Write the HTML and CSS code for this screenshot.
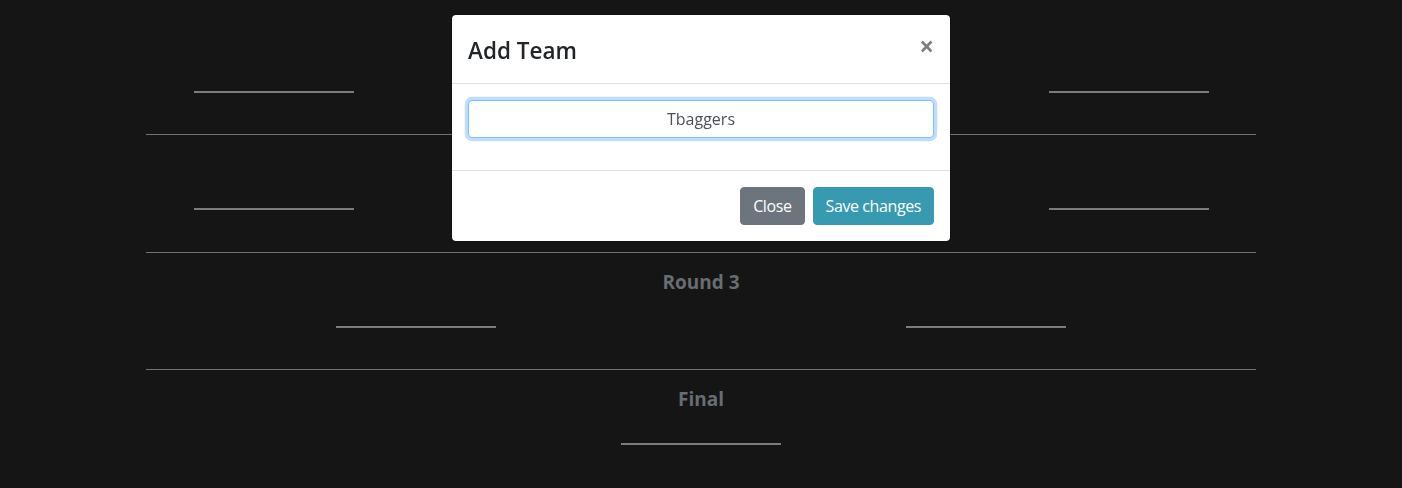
FILE: index.html
```html
<!DOCTYPE html>
<html lang="en">
<head>
<meta charset="utf-8">
<title>Bracket</title>
<link rel="stylesheet" href="styles.css">
</head>
<body>
<div class="page">
  <div class="container">
    <section class="round first">
      <h5 class="round-title">Round 1</h5>
      <div class="slots cols-4">
        <div class="slot"><span class="slot-line"></span></div>
        <div class="slot"><span class="slot-line"></span></div>
        <div class="slot"><span class="slot-line"></span></div>
        <div class="slot"><span class="slot-line"></span></div>
      </div>
    </section>
    <section class="round">
      <h5 class="round-title">Round 2</h5>
      <div class="slots cols-4">
        <div class="slot"><span class="slot-line"></span></div>
        <div class="slot"><span class="slot-line"></span></div>
        <div class="slot"><span class="slot-line"></span></div>
        <div class="slot"><span class="slot-line"></span></div>
      </div>
    </section>
    <section class="round">
      <h5 class="round-title">Round 3</h5>
      <div class="slots cols-2">
        <div class="slot"><span class="slot-line"></span></div>
        <div class="slot"><span class="slot-line"></span></div>
      </div>
    </section>
    <section class="round">
      <h5 class="round-title">Final</h5>
      <div class="slots cols-1">
        <div class="slot"><span class="slot-line"></span></div>
      </div>
    </section>
  </div>
</div>

<div class="modal">
  <div class="modal-dialog">
    <div class="modal-content">
      <div class="modal-header">
        <h4 class="modal-title">Add Team</h4>
        <button class="close" type="button" aria-label="Close">&times;</button>
      </div>
      <div class="modal-body">
        <div class="form-group">
          <input class="form-control" type="text" value="Tbaggers">
        </div>
      </div>
      <div class="modal-footer">
        <button class="btn btn-secondary" type="button">Close</button>
        <button class="btn btn-info" type="button">Save changes</button>
      </div>
    </div>
  </div>
</div>
</body>
</html>
```
FILE: styles.css
```css
* { box-sizing: border-box; }

html, body {
  margin: 0;
  padding: 0;
  background: #151515;
  font-family: "Open Sans", "Noto Sans", "Liberation Sans", sans-serif;
  font-size: 16px;
  line-height: 1.5;
  color: #212529;
  height: 100%;
  overflow: hidden;
}

.page {
  padding-top: 16.5px;
}

.container {
  width: 1110px;
  margin: 0 auto;
}

.round {
  border-top: 1px solid #737373;
  padding: 17px 0 41.5px;
}

.round.first {
  border-top-color: transparent;
}

.round-title {
  margin: 0 0 32px;
  font-size: 19px;
  line-height: 24px;
  font-weight: 700;
  text-align: center;
  color: #676d72;
}

.slots {
  display: grid;
  margin: 0 -15px;
}

.cols-4 { grid-template-columns: repeat(4, 1fr); }
.cols-2 { grid-template-columns: repeat(2, 1fr); }
.cols-1 { grid-template-columns: 1fr; }

.slot {
  display: flex;
  justify-content: center;
}

.slot-line {
  display: block;
  width: 160px;
  height: 2px;
  background: #7c7c7c;
}

/* Modal */
.modal {
  position: fixed;
  inset: 0;
  display: flex;
  justify-content: center;
  align-items: flex-start;
}

.modal-dialog {
  width: 500px;
  margin-top: 14px;
}

.modal-content {
  background: #fff;
  background-clip: padding-box;
  border: 1px solid rgba(0, 0, 0, 0.2);
  border-radius: 5px;
  display: flex;
  flex-direction: column;
}

.modal-header {
  display: flex;
  align-items: flex-start;
  justify-content: space-between;
  padding: 16px;
  border-bottom: 1px solid #dee2e6;
}

.modal-title {
  margin: 0;
  padding-top: 3px;
  font-size: 22.5px;
  font-weight: 600;
  line-height: 33px;
  color: #212529;
}

.close {
  padding: 18px 16px 14px;
  margin: -16px -16px -16px auto;
  background: transparent;
  border: 0;
  font-family: inherit;
  font-size: 26px;
  font-weight: 700;
  line-height: 1;
  color: #000;
  opacity: 0.5;
  text-shadow: 0 1px 0 #fff;
  cursor: pointer;
}

.modal-body {
  padding: 16px;
}

.form-group {
  margin-bottom: 16px;
}

.form-control {
  display: block;
  width: 100%;
  height: 38px;
  padding: 6px 12px;
  font-family: inherit;
  font-size: 16px;
  line-height: 1.5;
  color: #495057;
  text-align: center;
  background: #fff;
  border: 1px solid #80bdff;
  border-radius: 4px;
  box-shadow: 0 0 0 3.2px rgba(0, 123, 255, 0.25);
  outline: 0;
}

.modal-footer {
  display: flex;
  align-items: center;
  justify-content: flex-end;
  padding: 12px;
  border-top: 1px solid #dee2e6;
}

.btn {
  margin: 4px;
  padding: 6px 12px;
  font-family: inherit;
  font-size: 16px;
  line-height: 1.5;
  font-weight: 400;
  letter-spacing: -0.4px;
  color: #fff;
  border: 1px solid transparent;
  border-radius: 4px;
  cursor: pointer;
}

.btn-secondary {
  background: #6c757d;
  border-color: #6c757d;
}

.btn-info {
  background: #379ab1;
  border-color: #379ab1;
}
```
